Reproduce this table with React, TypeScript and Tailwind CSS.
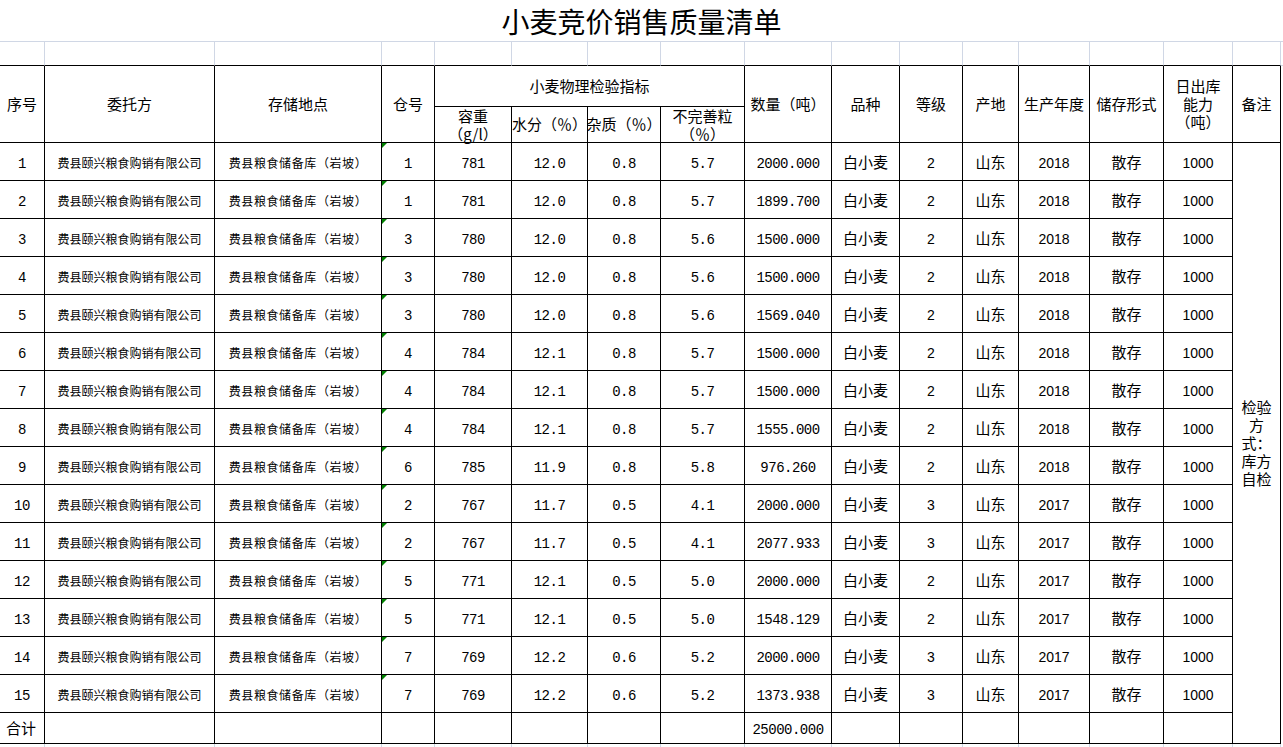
import React from "react";

const cjk = "font-['Noto_Sans_CJK_SC',sans-serif]";
const mono = "font-['Liberation_Mono',monospace] text-[14px] tracking-[-0.5px] pt-[5px]";
const sans = "font-['Liberation_Sans',Arial,sans-serif] text-[14px] pt-[3px]";
const cell = "flex items-center justify-center text-center border-r border-b border-black text-black whitespace-nowrap";
const h15 = `${cjk} text-[15px]`;
const d15 = `${cjk} text-[15px] pt-[2px]`;
const d12 = `${cjk} text-[12px] pt-[2px]`;

type Row = [string, string, string, string, string, string, string, string];

const rows: Row[] = [
  ["1", "781", "12.0", "0.8", "5.7", "2000.000", "2", "2018"],
  ["1", "781", "12.0", "0.8", "5.7", "1899.700", "2", "2018"],
  ["3", "780", "12.0", "0.8", "5.6", "1500.000", "2", "2018"],
  ["3", "780", "12.0", "0.8", "5.6", "1500.000", "2", "2018"],
  ["3", "780", "12.0", "0.8", "5.6", "1569.040", "2", "2018"],
  ["4", "784", "12.1", "0.8", "5.7", "1500.000", "2", "2018"],
  ["4", "784", "12.1", "0.8", "5.7", "1500.000", "2", "2018"],
  ["4", "784", "12.1", "0.8", "5.7", "1555.000", "2", "2018"],
  ["6", "785", "11.9", "0.8", "5.8", "976.260", "2", "2018"],
  ["2", "767", "11.7", "0.5", "4.1", "2000.000", "3", "2017"],
  ["2", "767", "11.7", "0.5", "4.1", "2077.933", "3", "2017"],
  ["5", "771", "12.1", "0.5", "5.0", "2000.000", "2", "2017"],
  ["5", "771", "12.1", "0.5", "5.0", "1548.129", "2", "2017"],
  ["7", "769", "12.2", "0.6", "5.2", "2000.000", "3", "2017"],
  ["7", "769", "12.2", "0.6", "5.2", "1373.938", "3", "2017"],
];

export default function App() {
  const blank = Array.from({ length: 16 });
  return (
    <div className="w-[1283px] h-[747px] bg-white overflow-hidden">
      <div className="grid grid-cols-[45px_170px_167px_53px_77px_76px_73px_84px_87px_68px_63px_56px_71px_74px_69px_48px_2px] grid-rows-[42px_24px_41px_36px_repeat(15,38px)_31px_3px]">
        {/* Title */}
        <div className={`col-span-full flex items-center justify-center border-b border-[#d0d7e5] ${cjk} text-[28px] text-black`}>
          小麦竞价销售质量清单
        </div>

        {/* Blank spreadsheet row */}
        {blank.map((_, i) => (
          <div key={`b${i}`} className="border-r border-r-[#d0d7e5] border-b border-b-black" />
        ))}
        <div className="border-b border-b-[#d0d7e5]" />

        {/* Header row 1 */}
        <div className={`${cell} row-span-2 ${h15}`}>序号</div>
        <div className={`${cell} row-span-2 ${h15}`}>委托方</div>
        <div className={`${cell} row-span-2 ${h15}`}>存储地点</div>
        <div className={`${cell} row-span-2 ${h15}`}>仓号</div>
        <div className={`${cell} col-span-4 ${h15}`}>小麦物理检验指标</div>
        <div className={`${cell} row-span-2 ${h15}`}>数量（吨）</div>
        <div className={`${cell} row-span-2 ${h15}`}>品种</div>
        <div className={`${cell} row-span-2 ${h15}`}>等级</div>
        <div className={`${cell} row-span-2 ${h15}`}>产地</div>
        <div className={`${cell} row-span-2 ${h15}`}>生产年度</div>
        <div className={`${cell} row-span-2 ${h15}`}>储存形式</div>
        <div className={`${cell} row-span-2 flex-col ${h15} leading-[18px]`}>
          <span>日出库</span>
          <span>能力</span>
          <span>（吨）</span>
        </div>
        <div className={`${cell} row-span-2 ${h15}`}>备注</div>
        <div className="row-span-2" />

        {/* Header row 2 */}
        <div className={`${cell} flex-col ${h15} leading-[18px]`}>
          <span>容重</span>
          <span>（g/l）</span>
        </div>
        <div className={`${cell} ${h15}`}>水分（％）</div>
        <div className={`${cell} ${h15}`}>杂质（％）</div>
        <div className={`${cell} flex-col ${h15} leading-[18px]`}>
          <span>不完善粒</span>
          <span>（％）</span>
        </div>

        {/* Data rows */}
        {rows.map((r, i) => (
          <React.Fragment key={`r${i}`}>
            <div className={`${cell} ${mono}`}>{i + 1}</div>
            <div className={`${cell} ${d12}`}>费县颐兴粮食购销有限公司</div>
            <div className={`${cell} ${d12} tracking-[0.6px]`}>费县粮食储备库（岩坡）</div>
            <div className={`${cell} relative ${mono}`}>
              <div className="absolute left-0 top-0 w-0 h-0 border-t-[5px] border-t-[#008000] border-r-[5px] border-r-transparent" />
              {r[0]}
            </div>
            <div className={`${cell} ${mono}`}>{r[1]}</div>
            <div className={`${cell} ${mono}`}>{r[2]}</div>
            <div className={`${cell} ${mono}`}>{r[3]}</div>
            <div className={`${cell} ${mono}`}>{r[4]}</div>
            <div className={`${cell} ${mono}`}>{r[5]}</div>
            <div className={`${cell} ${d15}`}>白小麦</div>
            <div className={`${cell} ${sans}`}>{r[6]}</div>
            <div className={`${cell} ${d15}`}>山东</div>
            <div className={`${cell} ${sans}`}>{r[7]}</div>
            <div className={`${cell} ${d15}`}>散存</div>
            <div className={`${cell} ${sans}`}>1000</div>
            {i === 0 && (
              <div className={`${cell} row-span-16 flex-col ${h15} leading-[18px]`}>
                <span>检验</span>
                <span>方</span>
                <span>式：</span>
                <span>库方</span>
                <span>自检</span>
              </div>
            )}
            <div />
          </React.Fragment>
        ))}

        {/* Total row */}
        <div className={`${cell} justify-start pl-[6px] ${h15}`}>合计</div>
        <div className={cell} />
        <div className={cell} />
        <div className={cell} />
        <div className={cell} />
        <div className={cell} />
        <div className={cell} />
        <div className={cell} />
        <div className={`${cell} ${mono}`}>25000.000</div>
        <div className={cell} />
        <div className={cell} />
        <div className={cell} />
        <div className={cell} />
        <div className={cell} />
        <div className={cell} />
        <div />

        {/* Trailing gridline stubs */}
        {blank.map((_, i) => (
          <div key={`t${i}`} className="border-r border-r-[#d0d7e5]" />
        ))}
        <div />
      </div>
    </div>
  );
}
